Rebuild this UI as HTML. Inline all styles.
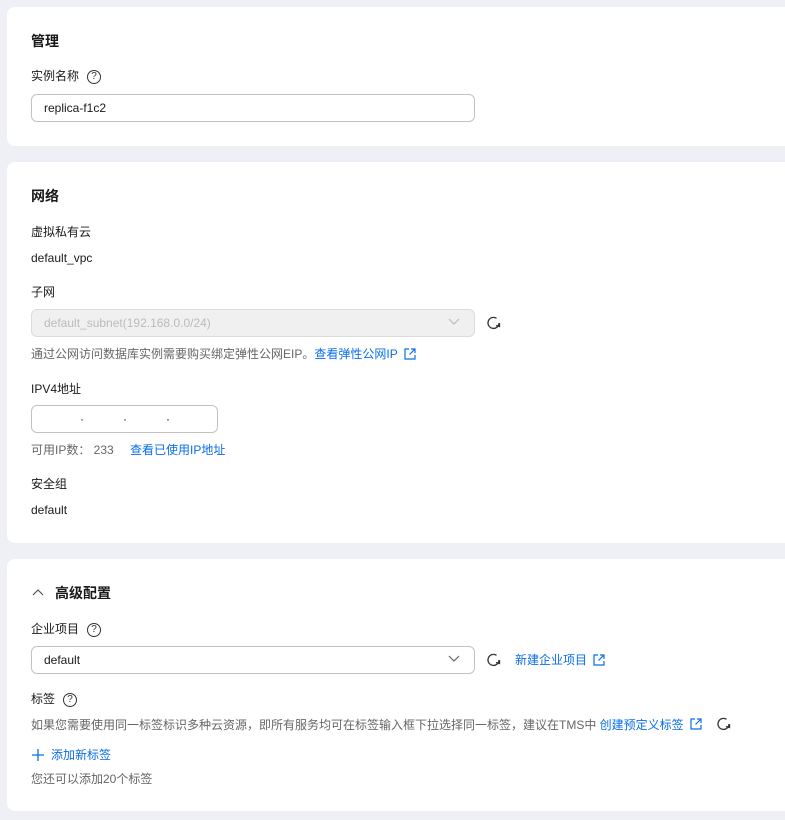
<!DOCTYPE html>
<html><head><meta charset="utf-8"><style>
*{margin:0;padding:0;box-sizing:border-box}
body{width:785px;height:820px;background:#eef0f5;font-family:"Liberation Sans","Noto Sans CJK SC",sans-serif;font-size:12px;color:#191919;position:relative;overflow:hidden}
.card{position:absolute;left:7px;right:0;background:#fff;border-radius:8px 0 0 8px}
.a{position:absolute;white-space:nowrap;line-height:16px}
.h{font-size:14px;font-weight:bold}
.g{color:#666}
.l{color:#0a6ee6}
.box{position:absolute;border:1px solid #c2c2c2;border-radius:6px;background:#fff}
.q{display:inline-block;width:14px;height:14px;border:1px solid #333;border-radius:50%;font-size:10px;line-height:12px;text-align:center;vertical-align:middle;margin-left:8px;color:#333}
svg{position:absolute}
</style></head><body>
<div class="card" style="top:7px;height:139px"></div>
<div class="card" style="top:162px;height:381px"></div>
<div class="card" style="top:559px;height:252px"></div>

<div class="a h" style="left:31px;top:33px">管理</div>
<div class="a" style="left:31px;top:68px">实例名称<span class="q">?</span></div>
<div class="box" style="left:31px;top:94px;width:444px;height:28px"></div>
<div class="a" style="left:44px;top:100px">replica-f1c2</div>

<div class="a h" style="left:31px;top:188px">网络</div>
<div class="a" style="left:31px;top:224px">虚拟私有云</div>
<div class="a" style="left:31px;top:250px">default_vpc</div>
<div class="a" style="left:31px;top:284px">子网</div>
<div class="box" style="left:31px;top:309px;width:444px;height:28px;background:#f0f0f0;border-color:#dcdcdc"></div>
<div class="a" style="left:44px;top:315px;color:#bbb">default_subnet(192.168.0.0/24)</div>
<svg style="left:447px;top:317px" width="14" height="10"><path d="M2 2 L7 7 L12 2" fill="none" stroke="#bbb" stroke-width="1.2"/></svg>
<svg style="left:486px;top:315px" width="16" height="16"><path d="M13 8 A5.5 5.5 0 1 1 10.5 3.3" fill="none" stroke="#333" stroke-width="1.3"/><path d="M10 10.5 L13.5 11.5 L13.5 8" fill="none" stroke="#333" stroke-width="1.3"/></svg>
<div class="a g" style="left:31px;top:346px">通过公网访问数据库实例需要购买绑定弹性公网EIP。<span class="l">查看弹性公网IP</span></div>
<svg style="left:403px;top:347px" width="14" height="14"><path d="M6 2 H2 V12 H12 V8 M8 2 H12 V6 M12 2 L6.5 7.5" fill="none" stroke="#0a6ee6" stroke-width="1.2"/></svg>
<div class="a" style="left:31px;top:381px">IPV4地址</div>
<div class="box" style="left:31px;top:405px;width:187px;height:28px"></div>
<div class="a" style="left:80px;top:411px">·</div>
<div class="a" style="left:123px;top:411px">·</div>
<div class="a" style="left:166px;top:411px">·</div>
<div class="a g" style="left:31px;top:442px">可用IP数： 233</div>
<div class="a l" style="left:130px;top:442px">查看已使用IP地址</div>
<div class="a" style="left:31px;top:476px">安全组</div>
<div class="a" style="left:31px;top:502px">default</div>

<svg style="left:31px;top:587px" width="14" height="12"><path d="M2 8 L7 3 L12 8" fill="none" stroke="#555" stroke-width="1.2"/></svg>
<div class="a h" style="left:55px;top:585px">高级配置</div>
<div class="a" style="left:31px;top:621px">企业项目<span class="q">?</span></div>
<div class="box" style="left:31px;top:646px;width:444px;height:28px"></div>
<div class="a" style="left:44px;top:652px">default</div>
<svg style="left:447px;top:654px" width="14" height="10"><path d="M2 2 L7 7 L12 2" fill="none" stroke="#666" stroke-width="1.2"/></svg>
<svg style="left:486px;top:652px" width="16" height="16"><path d="M13 8 A5.5 5.5 0 1 1 10.5 3.3" fill="none" stroke="#333" stroke-width="1.3"/><path d="M10 10.5 L13.5 11.5 L13.5 8" fill="none" stroke="#333" stroke-width="1.3"/></svg>
<div class="a l" style="left:515px;top:652px">新建企业项目</div>
<svg style="left:592px;top:653px" width="14" height="14"><path d="M6 2 H2 V12 H12 V8 M8 2 H12 V6 M12 2 L6.5 7.5" fill="none" stroke="#0a6ee6" stroke-width="1.2"/></svg>
<div class="a" style="left:31px;top:691px">标签<span class="q">?</span></div>
<div class="a g" style="left:31px;top:717px">如果您需要使用同一标签标识多种云资源，即所有服务均可在标签输入框下拉选择同一标签，建议在TMS中 <span class="l">创建预定义标签</span></div>
<svg style="left:689px;top:717px" width="14" height="14"><path d="M6 2 H2 V12 H12 V8 M8 2 H12 V6 M12 2 L6.5 7.5" fill="none" stroke="#0a6ee6" stroke-width="1.2"/></svg>
<svg style="left:716px;top:716px" width="16" height="16"><path d="M13 8 A5.5 5.5 0 1 1 10.5 3.3" fill="none" stroke="#333" stroke-width="1.3"/><path d="M10 10.5 L13.5 11.5 L13.5 8" fill="none" stroke="#333" stroke-width="1.3"/></svg>
<svg style="left:31px;top:748px" width="14" height="14"><path d="M7 1 V13 M1 7 H13" stroke="#0a6ee6" stroke-width="1.3"/></svg>
<div class="a l" style="left:51px;top:747px">添加新标签</div>
<div class="a g" style="left:31px;top:771px">您还可以添加20个标签</div>
</body></html>
